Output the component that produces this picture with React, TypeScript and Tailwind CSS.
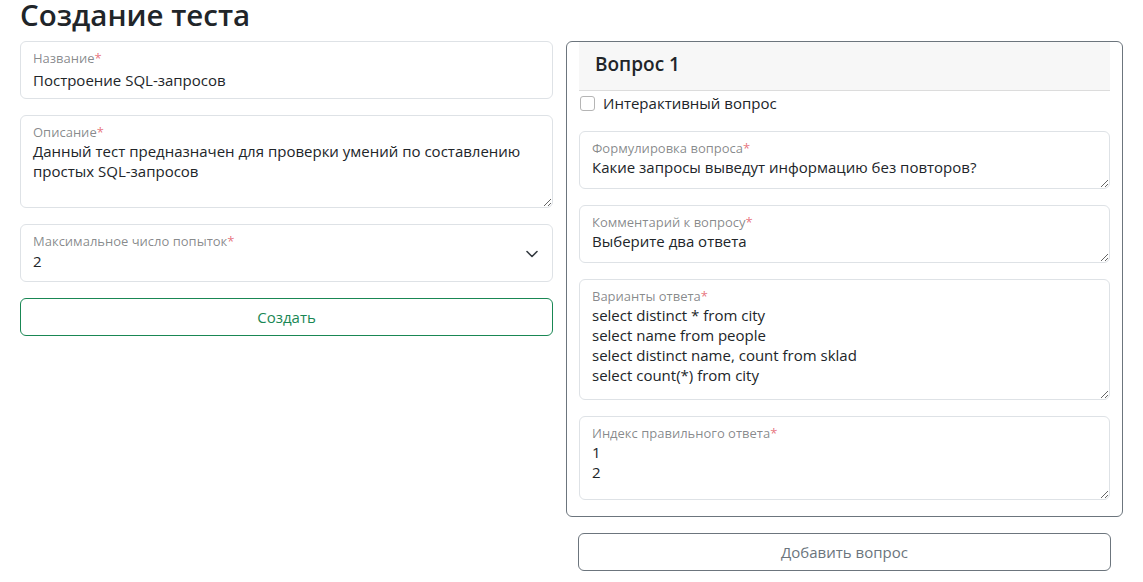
import React from "react";

const font = { fontFamily: '"Open Sans", "Noto Sans", sans-serif' };

function Label({ text }: { text: string }) {
  return (
    <label className="absolute left-[13px] top-[8px] text-[13px] leading-[18px] text-[#212529]/55 pointer-events-none">
      {text}
      <span className="text-[#dc3545]/70">*</span>
    </label>
  );
}

function Field({ label, value }: { label: string; value: string }) {
  return (
    <div className="relative">
      <input
        readOnly
        defaultValue={value}
        className="w-full h-[58px] pt-[26px] pb-[6px] px-[12px] border border-[#dee2e6] rounded-[6px] text-[15px] leading-[20px] text-[#212529] outline-none bg-white"
      />
      <Label text={label} />
    </div>
  );
}

function Area({ label, value, h }: { label: string; value: string; h: string }) {
  return (
    <div className="relative">
      <textarea
        readOnly
        defaultValue={value}
        className={`block w-full ${h} pt-[25px] pb-[6px] px-[12px] border border-[#dee2e6] rounded-[6px] text-[15px] leading-[20px] text-[#212529] outline-none bg-white resize-y`}
      />
      <Label text={label} />
    </div>
  );
}

export default function App() {
  return (
    <div className="min-h-screen bg-white px-[20px] text-[#212529]" style={font}>
      <h1 className="text-[29.5px] leading-[30px] font-semibold mb-[11px] text-[#212529]">
        Создание теста
      </h1>

      <div className="grid grid-cols-[533px_557px] gap-[13px] items-start">
        <div className="flex flex-col gap-[16px]">
          <Field label="Название" value="Построение SQL-запросов" />
          <Area
            label="Описание"
            h="h-[93px]"
            value={"Данный тест предназначен для проверки умений по составлению простых SQL-запросов"}
          />
          <div className="relative">
            <div className="h-[58px] pt-[26px] px-[12px] border border-[#dee2e6] rounded-[6px] text-[15px] leading-[20px] flex justify-between">
              <span>2</span>
              <svg width="12" height="8" viewBox="0 0 12 8" className="mt-[-1px] mr-[2px]">
                <path d="M1 1.5l5 5 5-5" fill="none" stroke="#343a40" strokeWidth="1.6" strokeLinecap="round" strokeLinejoin="round" />
              </svg>
            </div>
            <Label text="Максимальное число попыток" />
          </div>
          <button className="h-[38px] border border-[#198754] rounded-[6px] text-[15px] text-[#198754] bg-white">
            Создать
          </button>
        </div>

        <div className="flex flex-col gap-[16px]">
          <div className="border border-[#6c757d] rounded-[6px] px-[12px] pb-[16px]">
            <div className="h-[49px] bg-[#f7f7f7] border-b border-[#dcdcdc] pl-[16px] pt-[9px]">
              <span className="text-[19px] leading-[26px] font-semibold">Вопрос 1</span>
            </div>
            <div className="flex items-center gap-[8px] mt-[4px] mb-[20px] h-[16px]">
              <span className="w-[15px] h-[15px] border border-[#b5b5b5] rounded-[3px] ml-[1px]" />
              <span className="text-[15px] leading-[20px]">Интерактивный вопрос</span>
            </div>
            <div className="flex flex-col gap-[16px]">
              <Area label="Формулировка вопроса" h="h-[58px]" value="Какие запросы выведут информацию без повторов?" />
              <Area label="Комментарий к вопросу" h="h-[58px]" value="Выберите два ответа" />
              <Area
                label="Варианты ответа"
                h="h-[121px]"
                value={"select distinct * from city\nselect name from people\nselect distinct name, count from sklad\nselect count(*) from city"}
              />
              <Area label="Индекс правильного ответа" h="h-[84px]" value={"1\n2"} />
            </div>
          </div>
          <div className="px-[12px]">
            <button className="w-full h-[38px] border border-[#6c757d] rounded-[6px] text-[15px] text-[#6c757d] bg-white">
              Добавить вопрос
            </button>
          </div>
        </div>
      </div>
    </div>
  );
}
